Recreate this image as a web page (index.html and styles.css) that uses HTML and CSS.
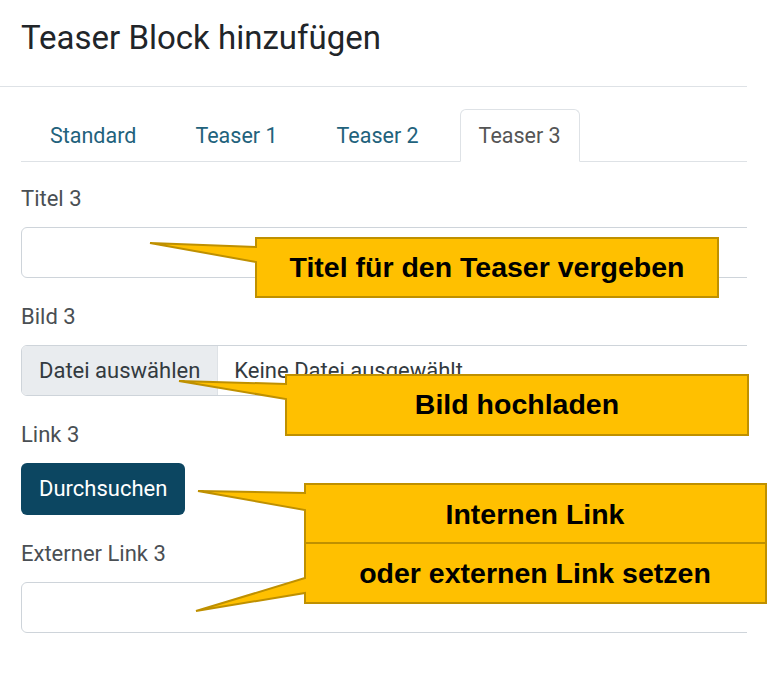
FILE: index.html
```html
<!DOCTYPE html>
<html lang="de">
<head>
    <meta charset="UTF-8">
    <meta name="viewport" content="width=device-width, initial-scale=1.0">
    <title>Teaser Block hinzufügen</title>
    <link rel="stylesheet" href="styles.css">
</head>
<body>
    <div class="shot">
        <div class="page">
            <div class="modal-header">
                <h1 class="modal-title">Teaser Block hinzufügen</h1>
            </div>
            <div class="modal-body">
                <ul class="tabs">
                    <li><a class="tab">Standard</a></li>
                    <li><a class="tab">Teaser 1</a></li>
                    <li><a class="tab">Teaser 2</a></li>
                    <li><a class="tab active">Teaser 3</a></li>
                </ul>

                <div class="field">
                    <label class="field-label">Titel 3</label>
                    <input class="form-input" type="text">
                </div>

                <div class="field">
                    <label class="field-label">Bild 3</label>
                    <div class="file-field">
                        <span class="file-btn">Datei auswählen</span>
                        <span class="file-name">Keine Datei ausgewählt</span>
                    </div>
                </div>

                <div class="field">
                    <label class="field-label">Link 3</label>
                    <button class="btn-primary">Durchsuchen</button>
                </div>

                <div class="field">
                    <label class="field-label">Externer Link 3</label>
                    <input class="form-input" type="text">
                </div>
            </div>
        </div>

        <!-- Hinweis-Callouts -->
        <svg class="callouts" width="767" height="678" viewBox="0 0 767 678">
            <path class="callout-shape" d="M256,238 H718 V297 H256 V262 L150,243 L256,247 Z"/>
            <text class="callout-text" x="487" y="277">Titel für den Teaser vergeben</text>

            <path class="callout-shape" d="M286,375 H748 V435 H286 V399 L179,381 L286,384 Z"/>
            <text class="callout-text" x="517" y="414">Bild hochladen</text>

            <path class="callout-shape" d="M305,543 H766 V603 H305 V593 L196,611 L305,578 Z"/>
            <path class="callout-shape" d="M305,484 H766 V543 H305 V510 L198,491 L305,493 Z"/>
            <text class="callout-text" x="535" y="524">Internen Link</text>
            <text class="callout-text" x="535" y="583">oder externen Link setzen</text>
        </svg>
    </div>
</body>
</html>
```

FILE: styles.css
```css
/* Reset */
* {
    margin: 0;
    padding: 0;
    box-sizing: border-box;
}

body {
    font-family: Roboto, "Liberation Sans", Arial, sans-serif;
    background-color: #ffffff;
    color: #212529;
}

.shot {
    position: relative;
    width: 767px;
    height: 678px;
    overflow: hidden;
}

.page {
    width: 747px;
    height: 100%;
    overflow: hidden;
}

/* Header */
.modal-header {
    padding: 19px 21px 29px;
    border-bottom: 1px solid #dee2e6;
}

.modal-title {
    font-size: 33px;
    font-weight: 400;
    line-height: 38px;
    color: #212529;
}

/* Body */
.modal-body {
    width: 800px;
    padding: 22px 0 0 21px;
}

.tabs {
    display: flex;
    gap: 23px;
    list-style: none;
    padding-left: 11px;
    border-bottom: 1px solid #dee2e6;
}

.tab {
    display: block;
    padding: 10px 17px 9px;
    margin-bottom: -1px;
    font-size: 21.5px;
    line-height: 32px;
    color: #22627c;
    border: 1px solid transparent;
    border-radius: 6px 6px 0 0;
    cursor: pointer;
}

.tab.active {
    padding: 10px 18px 9px;
    color: #555555;
    background-color: #ffffff;
    border-color: #dee2e6 #dee2e6 #ffffff;
}

.field {
    margin-top: 23px;
}

.tabs + .field {
    margin-top: 21px;
}

.field-label {
    display: block;
    margin-bottom: 12px;
    font-size: 22px;
    line-height: 32px;
    color: #4a4f54;
}

.form-input {
    display: block;
    width: 100%;
    height: 51px;
    border: 1px solid #ced4da;
    border-radius: 6px;
    background-color: #ffffff;
    outline: none;
}

.file-field {
    display: flex;
    height: 51px;
    border: 1px solid #ced4da;
    border-radius: 6px;
    overflow: hidden;
    font-size: 22px;
    color: #333a40;
}

.file-btn {
    display: flex;
    align-items: center;
    padding: 0 17px;
    background-color: #e9ecef;
    border-right: 1px solid #dee2e6;
}

.file-name {
    display: flex;
    align-items: center;
    padding-left: 16px;
}

.btn-primary {
    display: block;
    padding: 10px 18px;
    font-family: Roboto, "Liberation Sans", Arial, sans-serif;
    font-size: 22px;
    line-height: 32px;
    color: #ffffff;
    background-color: #0c4661;
    border: none;
    border-radius: 6px;
    cursor: pointer;
}

/* Callouts */
.callouts {
    position: absolute;
    top: 0;
    left: 0;
    pointer-events: none;
}

.callout-shape {
    fill: #ffc000;
    stroke: #bf9000;
    stroke-width: 2;
    stroke-linejoin: miter;
}

.callout-text {
    font-family: "Liberation Sans", Arial, sans-serif;
    font-weight: bold;
    font-size: 28.5px;
    fill: #000000;
    text-anchor: middle;
}
```
